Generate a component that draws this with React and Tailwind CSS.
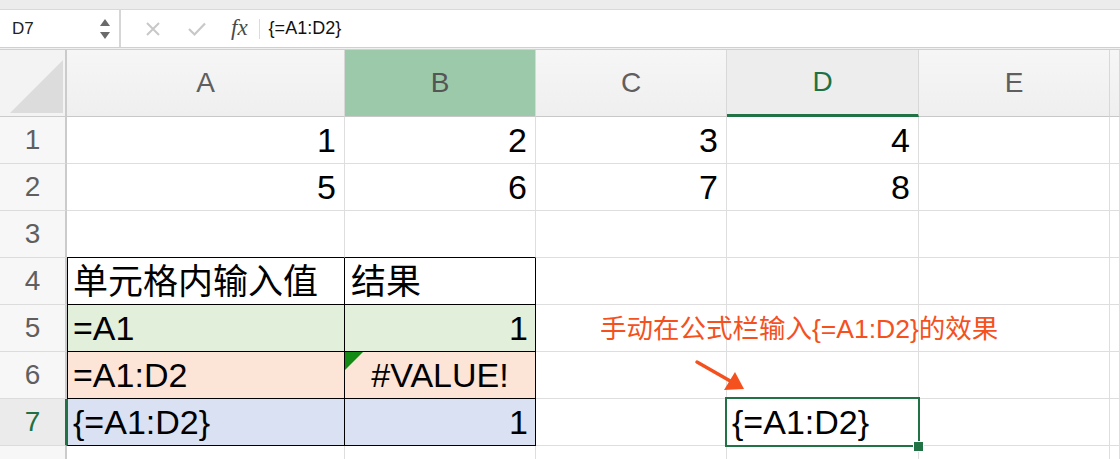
import React from "react";

const FONT = "font-['Liberation_Sans','Noto_Sans_CJK_SC',sans-serif]";

function RowHead({ n, active }) {
  return (
    <div
      className={`flex items-center justify-center border-b border-[#dcdcdc] text-[28px] ${
        active
          ? "bg-[#ebebeb] text-[#1e7145] border-r-2 border-r-[#217346]"
          : "bg-[#f7f7f7] text-[#5f5f5f] border-r-2 border-r-[#cbcbcb]"
      }`}
    >
      {n}
    </div>
  );
}

function Cell({ children, className = "" }) {
  return (
    <div
      className={`relative flex items-center border-r border-b border-[#dedede] text-[34px] leading-none text-black ${className}`}
    >
      {children}
    </div>
  );
}

export default function App() {
  const headers = ["A", "B", "C", "D", "E", ""];
  return (
    <div className={`relative w-[1120px] h-[459px] overflow-hidden bg-white ${FONT}`}>
      {/* top strip */}
      <div className="h-[10px] bg-[#ececec] border-b border-[#d9d9d9]" />
      {/* formula bar */}
      <div className="flex h-[37px] items-center bg-white">
        <div className="flex h-full w-[121px] items-center justify-between border-r-2 border-[#d6d6d6] pl-[12px] pr-[8px]">
          <span className="text-[17px] text-[#222]">D7</span>
          <svg width="12" height="24" viewBox="0 0 12 24">
            <path d="M6 2 L11 9 L1 9 Z" fill="#6a6a6a" />
            <path d="M1 15 L11 15 L6 22 Z" fill="#6a6a6a" />
          </svg>
        </div>
        <div className="flex h-full items-center">
          <svg className="ml-[24px]" width="16" height="16" viewBox="0 0 16 16">
            <path d="M2 2 L14 14 M14 2 L2 14" stroke="#c8c8c8" strokeWidth="2" />
          </svg>
          <svg className="ml-[26px]" width="20" height="16" viewBox="0 0 20 16">
            <path d="M2 8 L7.5 13.5 L18 2.5" stroke="#c8c8c8" strokeWidth="2.2" fill="none" />
          </svg>
          <span className="ml-[24px] font-['Liberation_Serif',serif] italic text-[23px] text-[#4a4a4a]">
            fx
          </span>
          <div className="ml-[11px] h-[20px] w-px bg-[#dcdcdc]" />
          <span className="ml-[9px] text-[18px] text-[#111]">{"{=A1:D2}"}</span>
        </div>
      </div>
      <div className="h-[3px] border-t border-b border-[#d0d0d0] bg-[#f0f0f0]" />

      {/* grid */}
      <div className="grid grid-cols-[67px_278px_191px_191px_192px_191px_1fr] grid-rows-[67px_repeat(8,47px)]">
        {/* header row */}
        <div className="relative border-r-2 border-b border-[#cbcbcb] bg-[#f3f3f3]">
          <svg className="absolute left-[9px] top-[9px]" width="55" height="55" viewBox="0 0 55 55">
            <path d="M54 1 L54 54 L1 54 Z" fill="#dcdcdc" />
          </svg>
        </div>
        {headers.map((h) => (
          <div
            key={h || "F"}
            className={`flex items-center justify-center border-r border-[#d8d8d8] text-[28px] ${
              h === "B"
                ? "bg-[#9bc9aa] text-[#555] border-b border-b-[#c8c8c8]"
                : h === "D"
                ? "bg-[#ededed] text-[#1e7145] border-b-[3px] border-b-[#217346]"
                : "bg-gradient-to-b from-[#f6f6f6] to-[#efefef] text-[#5f5f5f] border-b border-b-[#c8c8c8]"
            }`}
          >
            {h}
          </div>
        ))}

        {/* row 1 */}
        <RowHead n={1} />
        <Cell className="justify-end pr-[8px]">1</Cell>
        <Cell className="justify-end pr-[8px]">2</Cell>
        <Cell className="justify-end pr-[8px]">3</Cell>
        <Cell className="justify-end pr-[8px]">4</Cell>
        <Cell />
        <Cell />

        {/* row 2 */}
        <RowHead n={2} />
        <Cell className="justify-end pr-[8px]">5</Cell>
        <Cell className="justify-end pr-[8px]">6</Cell>
        <Cell className="justify-end pr-[8px]">7</Cell>
        <Cell className="justify-end pr-[8px]">8</Cell>
        <Cell />
        <Cell />

        {/* row 3 */}
        <RowHead n={3} />
        <Cell className="border-b-black" />
        <Cell className="border-b-black" />
        <Cell />
        <Cell />
        <Cell />
        <Cell />

        {/* row 4 */}
        <RowHead n={4} />
        <Cell className="border-l border-l-black border-r-black border-b-black pl-[5px] text-[35px]">单元格内输入值</Cell>
        <Cell className="border-r-black border-b-black pl-[6px] text-[35px]">结果</Cell>
        <Cell />
        <Cell />
        <Cell />
        <Cell />

        {/* row 5 */}
        <RowHead n={5} />
        <Cell className="border-l border-l-black border-r-black border-b-black bg-[#e2efda] pl-[5px]">=A1</Cell>
        <Cell className="border-r-black border-b-black bg-[#e2efda] justify-end pr-[7px]">1</Cell>
        <Cell />
        <Cell />
        <Cell />
        <Cell />

        {/* row 6 */}
        <RowHead n={6} />
        <Cell className="border-l border-l-black border-r-black border-b-black bg-[#fce4d6] pl-[5px]">=A1:D2</Cell>
        <Cell className="border-r-black border-b-black bg-[#fce4d6] justify-center">
          <svg className="absolute left-0 top-0" width="18" height="18" viewBox="0 0 18 18">
            <path d="M0 0 L18 0 L0 18 Z" fill="#138a13" />
          </svg>
          #VALUE!
        </Cell>
        <Cell />
        <Cell />
        <Cell />
        <Cell />

        {/* row 7 */}
        <RowHead n={7} active />
        <Cell className="border-l border-l-[#217346] border-r-black border-b-black bg-[#d9e1f2] pl-[5px]">
          {"{=A1:D2}"}
        </Cell>
        <Cell className="border-r-black border-b-black bg-[#d9e1f2] justify-end pr-[7px]">1</Cell>
        <Cell />
        <Cell className="z-10 pl-[5px]">
          {"{=A1:D2}"}
          <div className="pointer-events-none absolute -left-[2px] -top-[2px] -right-[2px] -bottom-[2px] border-2 border-[#217346]" />
          <div className="absolute -right-[6px] -bottom-[7px] h-[11px] w-[11px] bg-[#217346] border border-white" />
        </Cell>
        <Cell />
        <Cell />

        {/* row 8 */}
        <RowHead n="" />
        <Cell />
        <Cell />
        <Cell />
        <Cell />
        <Cell />
        <Cell />
      </div>

      {/* annotation */}
      <div className="absolute z-20 left-[600px] top-[316px] text-[26.5px] leading-[26px] text-[#f4511e] whitespace-nowrap">
        手动在公式栏输入{"{=A1:D2}"}的效果
      </div>
      <svg className="absolute z-20 left-[690px] top-[355px]" width="60" height="40" viewBox="0 0 60 40">
        <path d="M7 7 L42 27" stroke="#f4511e" strokeWidth="3.5" strokeLinecap="round" />
        <path d="M54 34 L34 35 L45 17 Z" fill="#f4511e" />
      </svg>
    </div>
  );
}
